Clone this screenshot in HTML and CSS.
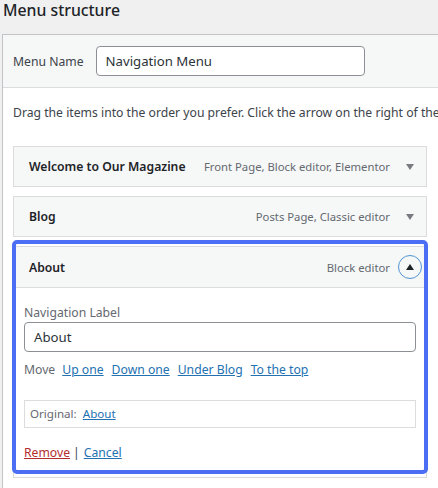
FILE: index.html
```html
<!DOCTYPE html>
<html>
<head>
<meta charset="utf-8">
<link rel="stylesheet" href="styles.css">
</head>
<body>
<h2 class="title">Menu structure</h2>
<div class="panel">
  <div class="panel-head">
    <label class="name-label">Menu Name</label>
    <div class="text-input name-input">Navigation Menu</div>
  </div>
  <div class="panel-body">
    <p class="drag-text">Drag the items into the order you prefer. Click the arrow on the right of the item to reveal additional configuration options.</p>
    <ul class="menu-list">
      <li class="item">
        <div class="item-head">
          <span class="item-title">Welcome to Our Magazine</span>
          <span class="item-meta">Front Page, Block editor, Elementor</span>
          <span class="toggle"><span class="tri-down"></span></span>
        </div>
      </li>
      <li class="item">
        <div class="item-head">
          <span class="item-title">Blog</span>
          <span class="item-meta">Posts Page, Classic editor</span>
          <span class="toggle"><span class="tri-down"></span></span>
        </div>
      </li>
      <li class="item item-open">
        <div class="highlight"></div>
        <div class="item-head">
          <span class="item-title">About</span>
          <span class="item-meta">Block editor</span>
          <span class="toggle toggle-focus"><span class="tri-up"></span></span>
        </div>
        <div class="item-settings">
          <label class="field-label">Navigation Label</label>
          <div class="text-input label-input">About</div>
          <div class="move-row">
            <span class="move-label">Move</span>
            <a class="link">Up one</a>
            <a class="link">Down one</a>
            <a class="link">Under Blog</a>
            <a class="link">To the top</a>
          </div>
          <div class="original">Original: <a class="link">About</a></div>
          <div class="actions"><a class="link link-delete">Remove</a><span class="sep">|</span><a class="link">Cancel</a></div>
        </div>
      </li>
    </ul>
  </div>
</div>
</body>
</html>
```

FILE: styles.css
```css
html, body {
  margin: 0;
  padding: 0;
  overflow: hidden;
}
body {
  background: #f0f0f1;
  font-family: "Noto Sans", "Open Sans", sans-serif;
  font-size: 12.2px;
  color: #3c434a;
  width: 438px;
  height: 488px;
}
.title {
  margin: 0;
  padding: 0 0 0 3px;
  height: 34px;
  font-size: 15.8px;
  line-height: 20px;
  font-weight: 500;
  color: #1d2327;
}
.panel {
  margin-left: 2px;
  width: 436px;
  border-left: 1px solid #c3c4c7;
  border-top: 1px solid #c3c4c7;
  background: #fff;
  height: 460px;
}
.panel-head {
  background: #f6f7f7;
  border-bottom: 1px solid #dcdcde;
  height: 52px;
  display: flex;
  align-items: center;
  padding-left: 10px;
  gap: 12px;
}
.name-label {
  color: #3c434a;
}
.text-input {
  box-sizing: border-box;
  background: #fff;
  border: 1px solid #8c8f94;
  border-radius: 4px;
  height: 30px;
  line-height: 28px;
  padding: 0 9px;
  font-size: 13.2px;
  color: #2c3338;
}
.name-input {
  width: 269px;
}
.panel-body {
  padding: 0 0 0 10px;
}
.drag-text {
  margin: 0;
  padding-top: 15px;
  height: 43px;
  line-height: 20px;
  white-space: nowrap;
  overflow: hidden;
}
.menu-list {
  list-style: none;
  margin: 0;
  padding: 0;
  width: 414px;
  display: flex;
  flex-direction: column;
  gap: 9px;
}
.item {
  position: relative;
  border: 1px solid #dcdcde;
  background: #f6f7f7;
  box-sizing: border-box;
}
.item-head {
  display: flex;
  align-items: center;
  height: 39px;
  padding: 0 4px 0 15px;
  white-space: nowrap;
}
.item-title {
  font-weight: 600;
  color: #1d2327;
  flex: 1;
}
.item-meta {
  color: #646970;
  font-size: 11.3px;
}
.toggle {
  width: 24px;
  height: 24px;
  margin-left: 8px;
  display: flex;
  align-items: center;
  justify-content: center;
  box-sizing: border-box;
  border-radius: 50%;
}
.toggle-focus {
  border: 1.5px solid #4f94d4;
}
.tri-down {
  width: 0;
  height: 0;
  border-left: 4px solid transparent;
  border-right: 4px solid transparent;
  border-top: 6px solid #787c82;
  margin-top: 1px;
}
.tri-up {
  width: 0;
  height: 0;
  border-left: 4px solid transparent;
  border-right: 4px solid transparent;
  border-bottom: 6px solid #1d2327;
  margin-top: -1px;
}
.item-open .item-head {
  border-bottom: 1px solid #dcdcde;
  height: 40px;
}
.item-settings {
  background: #fff;
  padding: 16px 10px 14px 10px;
  display: flex;
  flex-direction: column;
}
.field-label {
  color: #646970;
  line-height: 18px;
}
.label-input {
  width: 100%;
}
.move-row {
  display: flex;
  gap: 8px;
  margin-top: 8px;
  line-height: 20px;
  color: #646970;
}
.move-label {
  margin-right: -1px;
}
.link {
  color: #2271b1;
  text-decoration: underline;
}
.original {
  margin-top: 20px;
  border: 1px solid #dcdcde;
  height: 26px;
  line-height: 26px;
  padding-left: 5px;
  color: #646970;
  font-size: 11.6px;
}
.original .link {
  margin-left: 3px;
}
.actions {
  margin-top: 15px;
  line-height: 20px;
  color: #646970;
}
.sep {
  margin: 0 4px 0 3px;
  color: #3c434a;
}
.link-delete {
  color: #b32d2e;
}
.highlight {
  position: absolute;
  left: -2px;
  top: -7px;
  width: 416px;
  height: 234px;
  box-sizing: border-box;
  border: 4px solid #4c6ef5;
  border-radius: 5px;
  pointer-events: none;
  z-index: 2;
}
```
